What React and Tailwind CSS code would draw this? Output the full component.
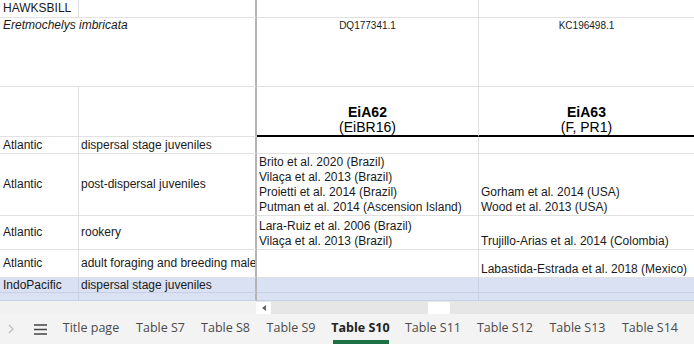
import React from "react";

const line = "border-b border-b-[#e1e1e1]";
const blueLine = "border-b border-b-[#c9d1e6]";

function Row({ h, blue, cells }) {
  const b = blue ? blueLine : line;
  const bg = blue ? "bg-[#d9e1f2]" : "bg-white";
  const vr = blue ? "border-r-[#c9d1e6]" : "border-r-[#e1e1e1]";
  return (
    <div className={`flex shrink-0 ${bg}`} style={{ height: h }}>
      <div className={`w-[79px] shrink-0 border-r ${vr} ${b} pl-[3px] flex items-center overflow-hidden whitespace-nowrap`}>
        {cells[0]}
      </div>
      <div className={`w-[178px] shrink-0 border-r-2 border-r-[#b4b4b4] ${b} pl-[2px] flex items-center overflow-hidden whitespace-nowrap`}>
        {cells[1]}
      </div>
      <div className={`w-[222px] shrink-0 border-r ${vr} ${b} pl-[2px] flex flex-col justify-end overflow-hidden whitespace-nowrap`}>
        {cells[2]}
      </div>
      <div className={`flex-1 ${b} pl-[2px] flex flex-col justify-end overflow-hidden whitespace-nowrap`}>
        {cells[3]}
      </div>
    </div>
  );
}

const tabs = [
  ["Title page", "w-[74px]"],
  ["Table S7", "w-[65px]"],
  ["Table S8", "w-[65px]"],
  ["Table S9", "w-[66px]"],
  ["Table S10", "w-[73px]", true],
  ["Table S11", "w-[72px]"],
  ["Table S12", "w-[72px]"],
  ["Table S13", "w-[73px]"],
  ["Table S14", "w-[72px]"],
];

export default function App() {
  return (
    <div className="w-[694px] h-[344px] overflow-hidden flex flex-col bg-white text-[12px] leading-[15px] text-[#1a1a1a] font-['Liberation_Sans',Arial,sans-serif]">
      {/* header rows */}
      <div className="flex h-[18px] shrink-0">
        <div className={`w-[79px] shrink-0 border-r border-r-[#e1e1e1] ${line} pl-[3px] flex items-center`}>HAWKSBILL</div>
        <div className={`w-[178px] shrink-0 border-r-2 border-r-[#b4b4b4] ${line}`}></div>
        <div className={`w-[222px] shrink-0 border-r border-r-[#e1e1e1] ${line}`}></div>
        <div className={`flex-1 ${line}`}></div>
      </div>
      <div className="flex h-[69px] shrink-0">
        <div className={`w-[257px] shrink-0 border-r-2 border-r-[#b4b4b4] ${line} pl-[3px] italic`}>
          Eretmochelys imbricata
        </div>
        <div className={`w-[222px] shrink-0 border-r border-r-[#e1e1e1] ${line} flex justify-center pt-[2px] text-[10px] leading-[12px]`}>
          DQ177341.1
        </div>
        <div className={`flex-1 ${line} flex justify-center pt-[2px] text-[10px] leading-[12px]`}>
          KC196498.1
        </div>
      </div>
      <div className="flex h-[50px] shrink-0">
        <div className={`w-[79px] shrink-0 border-r border-r-[#e1e1e1] ${line}`}></div>
        <div className={`w-[178px] shrink-0 border-r-2 border-r-[#b4b4b4] ${line}`}></div>
        <div className="w-[222px] shrink-0 border-r border-r-[#e1e1e1] border-b-2 border-b-black flex flex-col items-center justify-end text-[14px] leading-[15px] text-black">
          <span className="font-bold">EiA62</span>
          <span>(EiBR16)</span>
        </div>
        <div className="flex-1 border-b-2 border-b-black flex flex-col items-center justify-end text-[14px] leading-[15px] text-black">
          <span className="font-bold">EiA63</span>
          <span>(F, PR1)</span>
        </div>
      </div>

      <Row h={17} cells={["Atlantic", "dispersal stage juveniles", null, null]} />
      <Row
        h={62}
        cells={[
          "Atlantic",
          "post-dispersal juveniles",
          <>
            <span>Brito et al. 2020 (Brazil)</span>
            <span>Vilaça et al. 2013 (Brazil)</span>
            <span>Proietti et al. 2014 (Brazil)</span>
            <span>Putman et al. 2014 (Ascension Island)</span>
          </>,
          <>
            <span>Gorham et al. 2014 (USA)</span>
            <span>Wood et al. 2013 (USA)</span>
          </>,
        ]}
      />
      <Row
        h={34}
        cells={[
          "Atlantic",
          "rookery",
          <>
            <span>Lara-Ruiz et al. 2006 (Brazil)</span>
            <span>Vilaça et al. 2013 (Brazil)</span>
          </>,
          <span>Trujillo-Arias et al. 2014 (Colombia)</span>,
        ]}
      />
      <Row
        h={28}
        cells={["Atlantic", "adult foraging and breeding male", null, <span>Labastida-Estrada et al. 2018 (Mexico)</span>]}
      />
      <Row h={15} blue cells={["IndoPacific", "dispersal stage juveniles", null, null]} />
      <Row h={8} blue cells={[null, null, null, null]} />

      {/* horizontal scrollbar */}
      <div className="flex h-[13px] shrink-0">
        <div className="w-[256px] shrink-0 bg-[#f1f1f1]"></div>
        <div className="flex-1 bg-[#e6e6e6] flex items-start pt-[1px]">
          <div className="w-[15px] h-[12px] bg-white flex items-center justify-center">
            <svg width="4" height="6" viewBox="0 0 4 6">
              <path d="M4 0 L0 3 L4 6 Z" fill="#666" />
            </svg>
          </div>
          <div className="ml-[157px] w-[22px] h-[12px] bg-white"></div>
        </div>
      </div>

      {/* sheet tabs */}
      <div className="flex-1 bg-[#f3f3f3] flex items-stretch font-['Open_Sans','Noto_Sans',sans-serif] text-[12.5px] text-[#4a4a4a]">
        <div className="w-[24px] flex items-center justify-end pr-[10px]">
          <svg width="6" height="10" viewBox="0 0 6 10">
            <path d="M1 1 L5 5 L1 9" fill="none" stroke="#bdbdbd" strokeWidth="1.2" />
          </svg>
        </div>
        <div className="w-[30px] flex items-center justify-center pl-[3px]">
          <svg width="13" height="11" viewBox="0 0 13 11">
            <path d="M0 1 H13 M0 5.5 H13 M0 10 H13" stroke="#444" strokeWidth="1.3" />
          </svg>
        </div>
        {tabs.map(([label, w, active]) => (
          <div key={label} className={`${w} shrink-0 flex flex-col items-center`}>
            <div className={`flex-1 flex items-center pt-[1px] ${active ? "font-bold text-[#222]" : ""}`}>{label}</div>
            <div className={`h-[4px] w-[56px] ${active ? "bg-[#1e7145]" : ""}`}></div>
          </div>
        ))}
      </div>
    </div>
  );
}
